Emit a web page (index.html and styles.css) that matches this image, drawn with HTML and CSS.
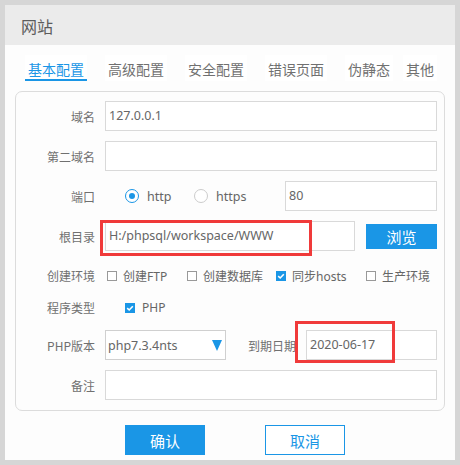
FILE: index.html
```html
<!DOCTYPE html>
<html lang="zh">
<head>
<meta charset="utf-8">
<title>网站</title>
<link rel="stylesheet" href="styles.css">
</head>
<body>
<div class="dialog">
  <div class="header">网站</div>
  <div class="tabs">
    <span class="tab active">基本配置</span>
    <span class="tab">高级配置</span>
    <span class="tab">安全配置</span>
    <span class="tab">错误页面</span>
    <span class="tab">伪静态</span>
    <span class="tab last">其他</span>
  </div>
  <div class="panel">
    <div class="row">
      <span class="lbl">域名</span>
      <div class="input w-full">127.0.0.1</div>
    </div>
    <div class="row">
      <span class="lbl">第二域名</span>
      <div class="input w-full"></div>
    </div>
    <div class="row">
      <span class="lbl">端口</span>
      <div class="radios">
        <span class="radio-item"><span class="radio on"></span>http</span>
        <span class="radio-item"><span class="radio"></span>https</span>
      </div>
      <div class="input w-port">80</div>
    </div>
    <div class="row">
      <span class="lbl">根目录</span>
      <div class="mark-wrap">
        <div class="input w-root">H:/phpsql/workspace/WWW</div>
        <span class="mark mark-root"></span>
      </div>
      <button class="btn-browse">浏览</button>
    </div>
    <div class="row row-short row-env">
      <span class="lbl">创建环境</span>
      <div class="checks">
        <span class="check-item"><span class="cb"></span>创建FTP</span>
        <span class="check-item"><span class="cb"></span>创建数据库</span>
        <span class="check-item"><span class="cb on"><svg viewBox="0 0 10 10" width="10" height="10"><path d="M2.2 5.2 L4.2 7 L7.8 3.2" fill="none" stroke="#fff" stroke-width="1.6"/></svg></span>同步hosts</span>
        <span class="check-item"><span class="cb"></span>生产环境</span>
      </div>
    </div>
    <div class="row row-short row-type">
      <span class="lbl">程序类型</span>
      <span class="check-item type-item"><span class="cb on"><svg viewBox="0 0 10 10" width="10" height="10"><path d="M2.2 5.2 L4.2 7 L7.8 3.2" fill="none" stroke="#fff" stroke-width="1.6"/></svg></span>PHP</span>
    </div>
    <div class="row row-ver">
      <span class="lbl">PHP版本</span>
      <div class="select">
        <span>php7.3.4nts</span>
        <svg class="caret" viewBox="0 0 10 11" width="10" height="11"><polygon points="0,0 10,0 5,11" fill="#1a96e6"/></svg>
      </div>
      <span class="lbl-date">到期日期</span>
      <div class="mark-wrap">
        <div class="input w-date">2020-06-17</div>
        <span class="mark mark-date"></span>
      </div>
    </div>
    <div class="row">
      <span class="lbl">备注</span>
      <div class="input w-full"></div>
    </div>
  </div>
  <div class="footer">
    <button class="btn btn-primary">确认</button>
    <button class="btn btn-ghost">取消</button>
  </div>
</div>
</body>
</html>
```

FILE: styles.css
```css
* { box-sizing: border-box; }

html, body {
  margin: 0;
  padding: 0;
}

body {
  background: #d6d6d6;
  font-family: "Noto Sans", "Noto Sans CJK SC", sans-serif;
  color: #666;
  width: 460px;
  height: 465px;
  overflow: hidden;
}

.dialog {
  margin: 5px 0 0 5px;
  width: 450px;
  height: 455px;
  background: #fdfdfd;
  display: flex;
  flex-direction: column;
}

.header {
  height: 40px;
  background: #ebebeb;
  padding-left: 16px;
  font-size: 16px;
  line-height: 42px;
  color: #5c5c5c;
  font-family: "Noto Sans CJK SC", sans-serif;
}

.tabs {
  display: flex;
  gap: 18px;
  margin-top: 10px;
  padding-left: 20px;
  height: 26px;
}

.tab {
  padding: 4px 3px 0;
  line-height: 20px;
  height: 26px;
  font-size: 14px;
  color: #707070;
  background: #fff;
  border-bottom: 2px solid transparent;
  font-family: "Noto Sans CJK SC", sans-serif;
}

.tab.active {
  color: #1a96e6;
  border-bottom-color: #1a96e6;
}

.tab.last { margin-left: -8px; }

.panel {
  margin: 10px 0 0 10px;
  width: 430px;
  height: 320px;
  border: 1px solid #dcdcdc;
  border-radius: 7px;
  padding: 9px 0 0 0;
  display: flex;
  flex-direction: column;
}

.row {
  display: flex;
  align-items: center;
  height: 30px;
  margin-bottom: 10px;
}

.lbl {
  width: 79px;
  margin-right: 10px;
  text-align: right;
  font-size: 12px;
  color: #707070;
  font-family: "Noto Sans CJK SC", sans-serif;
}

.input {
  height: 30px;
  border: 1px solid #d9d9d9;
  background: #fff;
  font-size: 12.5px;
  line-height: 28px;
  padding-left: 3px;
  color: #666;
  white-space: nowrap;
}

.w-full { width: 332px; }
.w-port { width: 152px; }
.w-root { width: 250px; }
.w-date { width: 131px; }

.radios {
  width: 180px;
  padding-left: 20px;
  display: flex;
  font-size: 12.5px;
  color: #666;
}

.radio-item {
  display: flex;
  align-items: center;
  gap: 8px;
  width: 69px;
}

.radio {
  width: 14px;
  height: 14px;
  border-radius: 50%;
  border: 1px solid #ccc;
  background: #fff;
  position: relative;
}

.radio.on { border-color: #1a96e6; }

.radio.on::after {
  content: "";
  position: absolute;
  left: 3px;
  top: 3px;
  width: 6px;
  height: 6px;
  border-radius: 50%;
  background: #1a96e6;
}

.mark-wrap {
  position: relative;
  display: flex;
}

.mark {
  position: absolute;
  border: 3px solid #f03a3a;
  pointer-events: none;
}

.mark-root {
  left: -5px;
  top: -1px;
  width: 212px;
  height: 36px;
}

.mark-date {
  left: -11px;
  top: -9px;
  width: 100px;
  height: 42px;
}

.btn-browse {
  margin-left: 11px;
  width: 71px;
  height: 25px;
  border: none;
  background: #1a96e6;
  color: #fff;
  font-size: 15px;
  font-family: "Noto Sans CJK SC", sans-serif;
  padding: 0;
}

.row-short { height: 24px; }
.row-env { margin-top: 4px; margin-bottom: 0; }
.row-type { margin-top: 11px; margin-bottom: 0; }
.row-ver { margin-top: 12px; }

.checks {
  display: grid;
  grid-template-columns: 80px 89px 90px auto;
  padding-left: 2px;
  font-size: 12px;
}

.check-item {
  display: flex;
  align-items: center;
  gap: 6px;
  font-size: 12px;
  color: #666;
  font-family: "Noto Sans", "Noto Sans CJK SC", sans-serif;
}

.type-item {
  margin-left: 20px;
  gap: 7px;
}

.cb {
  width: 10px;
  height: 10px;
  border: 1px solid #999;
  background: #fff;
  display: flex;
}

.cb.on {
  border: none;
  background: #1a96e6;
}

.select {
  width: 121px;
  height: 30px;
  border: 1px solid #d0d0d0;
  background: #fff;
  display: flex;
  align-items: center;
  justify-content: space-between;
  padding: 0 3px 0 2px;
  font-size: 12.5px;
  color: #666;
}

.caret { margin-top: 1px; }

.lbl-date {
  margin-left: 22px;
  width: 48px;
  margin-right: 10px;
  font-size: 12px;
  color: #707070;
  font-family: "Noto Sans CJK SC", sans-serif;
  white-space: nowrap;
}

.footer {
  display: flex;
  gap: 60px;
  padding: 14px 0 0 120px;
}

.btn {
  width: 80px;
  height: 30px;
  font-size: 15px;
  font-family: "Noto Sans CJK SC", sans-serif;
  padding: 0;
}

.btn-primary {
  background: #1a96e6;
  border: none;
  color: #fff;
}

.btn-ghost {
  background: #fff;
  border: 1px solid #1a96e6;
  color: #1a96e6;
}
```
